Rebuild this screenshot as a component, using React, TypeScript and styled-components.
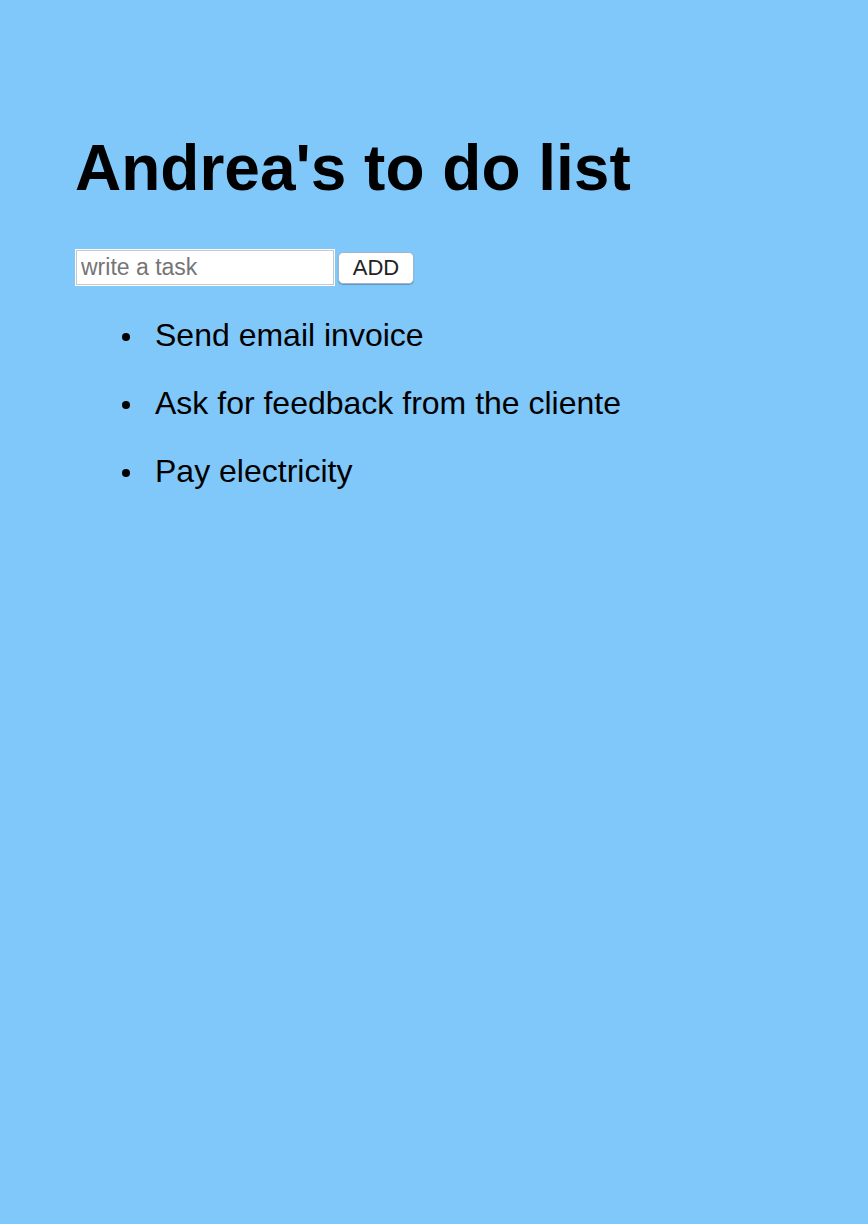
import React from "react";
import styled, { createGlobalStyle } from "styled-components";

const Global = createGlobalStyle`
  html, body { margin: 0; padding: 0; background: #80c8fa; }
  body { font-family: "Liberation Sans", Arial, sans-serif; color: #000; }
`;

const Page = styled.main`
  min-height: 1224px;
  padding: 130px 0 0 75px;
  box-sizing: border-box;
`;

const Title = styled.h1`
  margin: 0;
  font-size: 64px;
  font-weight: 700;
  line-height: 76px;
`;

const Form = styled.form`
  display: flex;
  align-items: center;
  gap: 3px;
  margin-top: 43px;
`;

const Input = styled.input`
  width: 260px;
  height: 37px;
  box-sizing: border-box;
  border: 2px solid #c8c8c8;
  outline: 1px solid #ffffff;
  outline-offset: -1px;
  background: #fff;
  padding: 0 4px;
  font-family: "Liberation Sans", Arial, sans-serif;
  font-size: 23px;
  &::placeholder { color: #757575; }
`;

const Button = styled.button`
  width: 76px;
  height: 32px;
  box-sizing: border-box;
  border: 1px solid #a0b4c8;
  border-radius: 5px;
  background: #fff;
  box-shadow: 0 1px 1px rgba(0, 0, 0, 0.25);
  font-family: "Liberation Sans", Arial, sans-serif;
  font-size: 22px;
  color: #222;
  padding: 0;
`;

const List = styled.ul`
  margin: 31px 0 0;
  padding-left: 47px;
  list-style: none;
`;

const Item = styled.li`
  display: flex;
  align-items: center;
  gap: 25px;
  font-size: 32px;
  line-height: 36px;
  margin-bottom: 32px;
  &::before {
    content: "";
    flex: none;
    width: 8px;
    height: 8px;
    border-radius: 50%;
    background: #000;
    margin-top: 3px;
  }
`;

const tasks = ["Send email invoice", "Ask for feedback from the cliente", "Pay electricity"];

export default function App() {
  return (
    <>
      <Global />
      <Page>
        <Title>Andrea's to do list</Title>
        <Form onSubmit={(e) => e.preventDefault()}>
          <Input placeholder="write a task" />
          <Button type="submit">ADD</Button>
        </Form>
        <List>
          {tasks.map((t) => (
            <Item key={t}>{t}</Item>
          ))}
        </List>
      </Page>
    </>
  );
}
